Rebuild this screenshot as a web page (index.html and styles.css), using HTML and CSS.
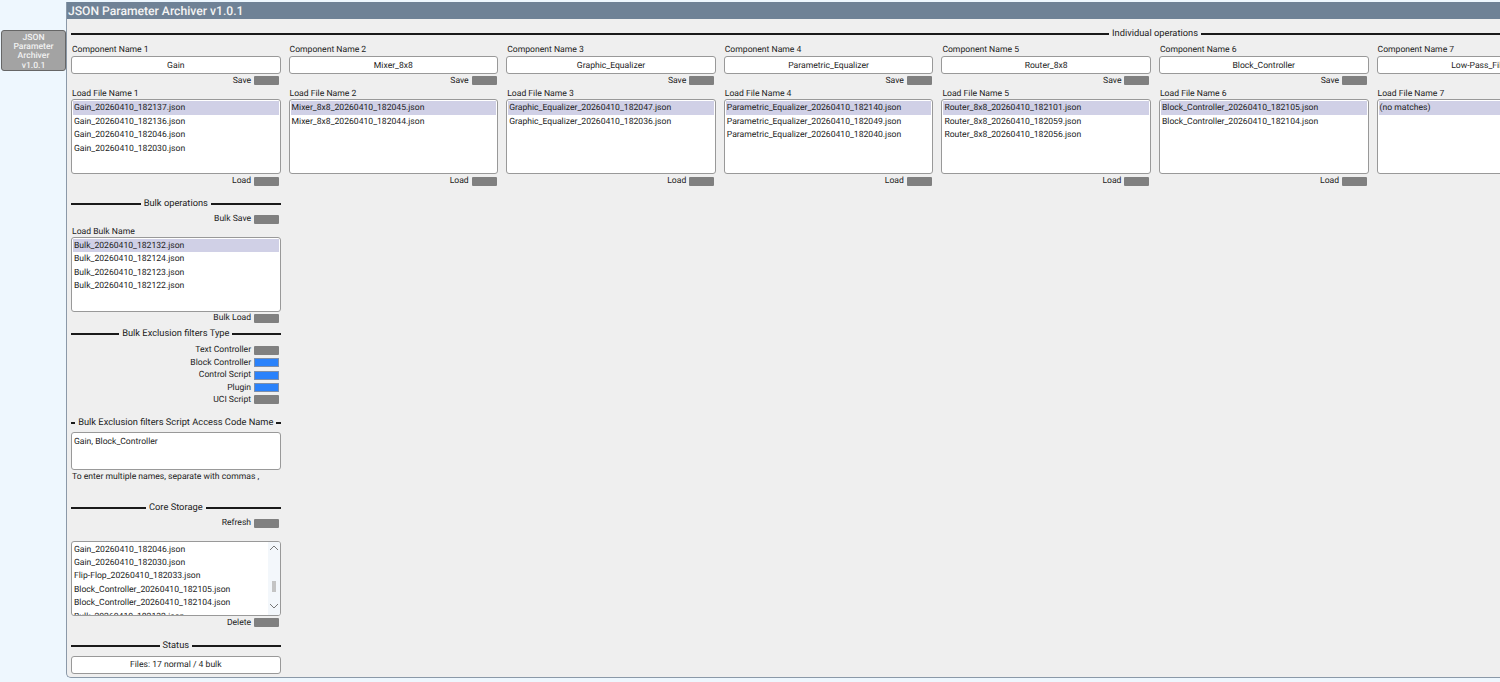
FILE: index.html
```html
<!DOCTYPE html>
<html>
  <head>
    <title>JSON Parameter Archiver</title>
    <meta charset="UTF-8">
    <link rel="stylesheet" href="styles.css">
  </head>
  <body>
    <div class="nav">
      <button class="nav-btn">JSON Parameter Archiver v1.0.1</button>
    </div>
    <div class="panel">
      <div class="title">JSON Parameter Archiver v1.0.1</div>
      <div class="content">
        <div class="heading heading-first"><span>Individual operations</span></div>
        <div class="components">
          <div class="comp">
            <div class="label">Component Name 1</div>
            <div class="field">Gain</div>
            <div class="action">Save <i class="led"></i></div>
            <div class="label label-load">Load File Name 1</div>
            <div class="list">
              <div class="row selected">Gain_20260410_182137.json</div>
              <div class="row">Gain_20260410_182136.json</div>
              <div class="row">Gain_20260410_182046.json</div>
              <div class="row">Gain_20260410_182030.json</div>
            </div>
            <div class="action">Load <i class="led"></i></div>
          </div>
          <div class="comp">
            <div class="label">Component Name 2</div>
            <div class="field">Mixer_8x8</div>
            <div class="action">Save <i class="led"></i></div>
            <div class="label label-load">Load File Name 2</div>
            <div class="list">
              <div class="row selected">Mixer_8x8_20260410_182045.json</div>
              <div class="row">Mixer_8x8_20260410_182044.json</div>
            </div>
            <div class="action">Load <i class="led"></i></div>
          </div>
          <div class="comp">
            <div class="label">Component Name 3</div>
            <div class="field">Graphic_Equalizer</div>
            <div class="action">Save <i class="led"></i></div>
            <div class="label label-load">Load File Name 3</div>
            <div class="list">
              <div class="row selected">Graphic_Equalizer_20260410_182047.json</div>
              <div class="row">Graphic_Equalizer_20260410_182036.json</div>
            </div>
            <div class="action">Load <i class="led"></i></div>
          </div>
          <div class="comp">
            <div class="label">Component Name 4</div>
            <div class="field">Parametric_Equalizer</div>
            <div class="action">Save <i class="led"></i></div>
            <div class="label label-load">Load File Name 4</div>
            <div class="list">
              <div class="row selected">Parametric_Equalizer_20260410_182140.json</div>
              <div class="row">Parametric_Equalizer_20260410_182049.json</div>
              <div class="row">Parametric_Equalizer_20260410_182040.json</div>
            </div>
            <div class="action">Load <i class="led"></i></div>
          </div>
          <div class="comp">
            <div class="label">Component Name 5</div>
            <div class="field">Router_8x8</div>
            <div class="action">Save <i class="led"></i></div>
            <div class="label label-load">Load File Name 5</div>
            <div class="list">
              <div class="row selected">Router_8x8_20260410_182101.json</div>
              <div class="row">Router_8x8_20260410_182059.json</div>
              <div class="row">Router_8x8_20260410_182056.json</div>
            </div>
            <div class="action">Load <i class="led"></i></div>
          </div>
          <div class="comp">
            <div class="label">Component Name 6</div>
            <div class="field">Block_Controller</div>
            <div class="action">Save <i class="led"></i></div>
            <div class="label label-load">Load File Name 6</div>
            <div class="list">
              <div class="row selected">Block_Controller_20260410_182105.json</div>
              <div class="row">Block_Controller_20260410_182104.json</div>
            </div>
            <div class="action">Load <i class="led"></i></div>
          </div>
          <div class="comp">
            <div class="label">Component Name 7</div>
            <div class="field">Low-Pass_Filter</div>
            <div class="action">Save <i class="led"></i></div>
            <div class="label label-load">Load File Name 7</div>
            <div class="list">
              <div class="row selected">(no matches)</div>
            </div>
            <div class="action">Load <i class="led"></i></div>
          </div>
        </div>

        <div class="side">
          <div class="heading heading-bulk"><span>Bulk operations</span></div>
          <div class="action action-bulk-save">Bulk Save <i class="led"></i></div>
          <div class="label">Load Bulk Name</div>
          <div class="list">
            <div class="row selected">Bulk_20260410_182132.json</div>
            <div class="row">Bulk_20260410_182124.json</div>
            <div class="row">Bulk_20260410_182123.json</div>
            <div class="row">Bulk_20260410_182122.json</div>
          </div>
          <div class="action">Bulk Load <i class="led"></i></div>

          <div class="heading heading-type"><span>Bulk Exclusion filters Type</span></div>
          <div class="filters">
            <div class="action">Text Controller <i class="led"></i></div>
            <div class="action">Block Controller <i class="led on"></i></div>
            <div class="action">Control Script <i class="led on"></i></div>
            <div class="action">Plugin <i class="led on"></i></div>
            <div class="action">UCI Script <i class="led"></i></div>
          </div>

          <div class="heading heading-code"><span>Bulk Exclusion filters Script Access Code Name</span></div>
          <div class="textbox">Gain, Block_Controller</div>
          <div class="note">To enter multiple names, separate with commas ,</div>

          <div class="heading heading-core"><span>Core Storage</span></div>
          <div class="action action-refresh">Refresh <i class="led"></i></div>
          <div class="list list-core">
            <div class="row">Gain_20260410_182046.json</div>
            <div class="row">Gain_20260410_182030.json</div>
            <div class="row">Flip-Flop_20260410_182033.json</div>
            <div class="row">Block_Controller_20260410_182105.json</div>
            <div class="row">Block_Controller_20260410_182104.json</div>
            <div class="row">Bulk_20260410_182132.json</div>
            <div class="scrollbar">
              <svg width="10" height="6" viewBox="0 0 10 6"><path d="M1 5 L5 1 L9 5" fill="none" stroke="#777" stroke-width="1"/></svg>
              <i class="thumb"></i>
              <svg width="10" height="6" viewBox="0 0 10 6"><path d="M1 1 L5 5 L9 1" fill="none" stroke="#777" stroke-width="1"/></svg>
            </div>
          </div>
          <div class="action action-delete">Delete <i class="led"></i></div>

          <div class="heading heading-status"><span>Status</span></div>
          <div class="field field-status">Files: 17 normal / 4 bulk</div>
        </div>
      </div>
    </div>
  </body>
</html>
```

FILE: styles.css
```css
html, body {
  margin: 0;
  height: 682px;
  overflow: hidden;
}

body {
  display: flex;
  align-items: flex-start;
  background-color: #eef7fe;
  font-family: Roboto, sans-serif;
  font-size: 8.6px;
  color: #222;
  text-rendering: geometricPrecision;
}

/* Left nav */
.nav {
  width: 65px;
  flex: none;
  padding: 30px 0 0 1px;
  box-sizing: border-box;
}

.nav-btn {
  display: block;
  width: 65px;
  height: 41px;
  padding: 3px 6px 0;
  background-color: #a3a3a3;
  border: 1px solid #666;
  border-radius: 3px;
  color: #f2f2f2;
  font: 500 8.6px/9.2px Roboto, sans-serif;
  text-rendering: geometricPrecision;
  text-align: center;
}

/* Main panel */
.panel {
  flex: none;
  width: 2300px;
  height: 676px;
  margin: 2px 0 0 1px;
  box-sizing: border-box;
  background-color: #efefef;
  border-left: 1px solid #8b99a8;
  border-bottom: 1px solid #8b99a8;
  border-bottom-left-radius: 5px;
}

.title {
  height: 17px;
  padding-left: 1px;
  background-color: #6f8296;
  color: #f4f4f4;
  font-size: 12.15px;
  font-weight: 500;
  line-height: 19px;
}

.content {
  padding: 0 0 0 4px;
  width: 2168px;
}

/* Section headings with a rule either side */
.heading {
  display: flex;
  align-items: center;
  gap: 3px;
  height: 12px;
  font-size: 9.3px;
  line-height: 12px;
  white-space: nowrap;
}

.heading::before, .heading::after {
  content: "";
  flex: 1;
  height: 2px;
  background-color: #1a1a1a;
}

.heading-first { margin-top: 9px; }
.heading-bulk { margin-top: 11px; }
.heading-type { margin-top: 4px; }
.heading-code { margin-top: 11.5px; }
.heading-core { margin-top: 19px; }
.heading-status { margin-top: 12px; }

/* Components */
.components {
  display: flex;
  gap: 8px;
  margin-top: 3px;
}

.comp {
  width: 209.6px;
  flex: none;
}

.side {
  width: 209.6px;
}

.label {
  height: 12px;
  padding-left: 1px;
  line-height: 14px;
}

.label-load { margin-top: 1px; }

.field {
  height: 18px;
  margin-top: 1px;
  box-sizing: border-box;
  background-color: #fff;
  border: 1px solid #999;
  border-radius: 3px;
  line-height: 18px;
  text-align: center;
}

.field-status {
  margin-top: 4px;
  line-height: 17px;
}

.action {
  display: flex;
  justify-content: flex-end;
  align-items: center;
  gap: 3px;
  height: 12.4px;
  padding: 1px 1.5px 0 0;
  box-sizing: border-box;
  line-height: 12px;
}

.action-bulk-save { margin-top: 2.6px; }
.action-refresh { margin-top: 2.5px; }
.action-delete { margin-top: 0.5px; }

.filters { margin-top: 3.5px; }

.led {
  display: block;
  width: 25px;
  height: 9px;
  background-color: #808080;
  border-radius: 1px;
}

.led.on {
  background-color: #2a82fb;
  box-shadow: inset 0 0 0 1px #7f8fa8;
}

.list {
  position: relative;
  height: 75px;
  padding: 1px 1px;
  box-sizing: border-box;
  overflow: hidden;
  background-color: #fff;
  border: 1px solid #999;
  border-radius: 3px;
}

.row {
  height: 13.4px;
  padding-left: 1px;
  line-height: 15px;
  white-space: nowrap;
}

.row.selected {
  background-color: #d0d0e6;
}

.list-core {
  height: 75px;
  margin-top: 11.6px;
  padding-top: 1px;
}

.scrollbar {
  position: absolute;
  top: 0;
  right: 0;
  bottom: 0;
  width: 12px;
  padding-top: 3px;
  box-sizing: border-box;
  background-color: #f3f7fb;
}

.scrollbar svg {
  display: block;
  margin-left: 1px;
}

.thumb {
  display: block;
  width: 4px;
  height: 11px;
  margin: 30px 0 11px 4px;
  background-color: #c4c4c4;
}

.textbox {
  height: 38px;
  margin-top: 3px;
  padding: 3px 2px;
  box-sizing: border-box;
  background-color: #fff;
  border: 1px solid #999;
  border-radius: 3px;
  line-height: 12px;
}

.note {
  height: 12px;
  margin-top: 1px;
  padding-left: 1px;
  line-height: 12px;
}
```
